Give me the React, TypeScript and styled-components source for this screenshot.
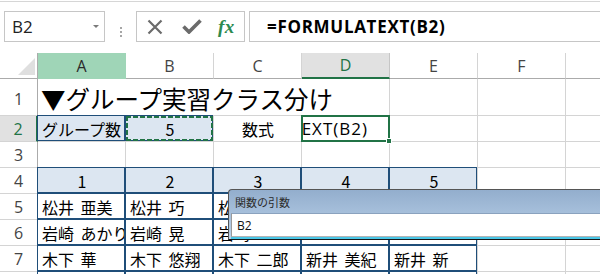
import React from 'react';
import styled, { createGlobalStyle, css } from 'styled-components';

const UI = `"Open Sans", "Liberation Sans", sans-serif`;
const JP = `"Noto Sans CJK JP", "Noto Sans", sans-serif`;

const GlobalStyle = createGlobalStyle`
  html, body { margin: 0; padding: 0; background: #fff; }
  body { width: 600px; height: 274px; overflow: hidden; font-family: ${JP}; }
  #root { width: 600px; height: 274px; }
  * { box-sizing: border-box; }
`;

const Window = styled.div`
  width: 600px;
  height: 274px;
  overflow: hidden;
  background: #fff;
  display: flex;
  flex-direction: column;
`;

/* ---------- formula bar ---------- */
const FormulaBar = styled.div`
  flex: none;
  margin-top: 1px;
  height: 52px;
  border-top: 1px solid #d6d6d6;
  padding: 9px 0 0 4px;
  display: flex;
  align-items: flex-start;
`;

const NameBox = styled.div`
  flex: none;
  width: 101px;
  height: 31px;
  border: 1px solid #c6c6c6;
  display: flex;
  align-items: center;
  justify-content: space-between;
  padding: 0 5px 0 7px;
  font: 17px ${UI};
  color: #222;
`;

const DropArrow = styled.span`
  width: 0;
  height: 0;
  border-left: 3px solid transparent;
  border-right: 3px solid transparent;
  border-top: 3px solid #7a7a7a;
`;

const Grip = styled.div`
  flex: none;
  align-self: center;
  margin: 0 14px 0 15px;
  display: flex;
  flex-direction: column;
  gap: 2px;
`;

const GripDot = styled.span`
  width: 2px;
  height: 2px;
  background: #a6a6a6;
`;

const ButtonGroup = styled.div`
  flex: none;
  width: 109px;
  height: 31px;
  border: 1px solid #c6c6c6;
  display: flex;
  align-items: center;
  padding-left: 10px;
`;

const IconSlot = styled.span<{ $gap: number }>`
  display: flex;
  align-items: center;
  margin-right: ${p => p.$gap}px;
`;

const FxLabel = styled.span`
  font: italic bold 19px "Liberation Serif", "DejaVu Serif", serif;
  color: #2c8a50;
  letter-spacing: 0.5px;
  line-height: 1;
  margin-top: -1px;
`;

const FormulaInput = styled.div`
  flex: none;
  width: 420px;
  height: 31px;
  margin-left: 4px;
  border: 1px solid #c6c6c6;
  border-right: none;
  display: flex;
  align-items: center;
  padding-left: 17px;
  font: bold 17px ${UI};
  letter-spacing: 0.7px;
  color: #000;
`;

/* ---------- sheet grid ---------- */
const Sheet = styled.div`
  position: relative;
  flex: none;
  display: grid;
  width: 654px;
  grid-template-columns: 38px repeat(7, 88px);
  grid-template-rows: 26px 37px repeat(7, 26px);
`;

const Corner = styled.div`
  border-right: 1px solid #ababab;
  border-bottom: 1px solid #ababab;
  display: flex;
  align-items: flex-end;
  justify-content: flex-end;
  padding: 0 2px 3px 0;
`;

const CornerTriangle = styled.span`
  width: 0;
  height: 0;
  border-left: 17px solid transparent;
  border-bottom: 17px solid #dfdfdf;
`;

type ColState = 'normal' | 'range' | 'active';

const ColHeader = styled.div<{ $state: ColState }>`
  display: flex;
  align-items: center;
  justify-content: center;
  font: 16px ${UI};
  color: #444;
  background: #fff;
  border-right: 1px solid #d4d4d4;
  border-bottom: 1px solid #ababab;
  ${p =>
    p.$state === 'range' &&
    css`
      background: #9fd5b7;
      color: #2b2b2b;
      border-right-color: #9fd5b7;
      border-bottom-color: #9fd5b7;
    `}
  ${p =>
    p.$state === 'active' &&
    css`
      background: #e1e1e1;
      color: #217346;
      border-right-color: #c6c6c6;
      border-bottom: 2px solid #217346;
    `}
`;

const RowHeader = styled.div<{ $active?: boolean; $bottom?: boolean }>`
  display: flex;
  justify-content: center;
  align-items: ${p => (p.$bottom ? 'flex-end' : 'center')};
  padding-bottom: ${p => (p.$bottom ? '5px' : '0')};
  font: 16px ${UI};
  color: #444;
  border-right: 1px solid #ababab;
  border-bottom: 1px solid #d4d4d4;
  ${p =>
    p.$active &&
    css`
      background: #e1e1e1;
      color: #217346;
      border-right: 2px solid #217346;
    `}
`;

const boxBorder = css`
  &::before {
    content: '';
    position: absolute;
    top: -1px;
    left: -1px;
    right: 0;
    bottom: 0;
    border: 1px solid #1f4e79;
    z-index: 1;
    pointer-events: none;
  }
`;

const antsBorder = css`
  &::after {
    content: '';
    position: absolute;
    top: 0;
    left: 0;
    right: 0;
    bottom: 0;
    z-index: 2;
    pointer-events: none;
    background:
      repeating-linear-gradient(90deg, #217346 0 5px, transparent 5px 7px) top left / 100% 2px no-repeat,
      repeating-linear-gradient(90deg, #217346 0 5px, transparent 5px 7px) bottom left / 100% 2px no-repeat,
      repeating-linear-gradient(180deg, #217346 0 5px, transparent 5px 7px) top left / 2px 100% no-repeat,
      repeating-linear-gradient(180deg, #217346 0 5px, transparent 5px 7px) top right / 2px 100% no-repeat;
  }
`;

const activeBorder = css`
  &::after {
    content: '';
    position: absolute;
    top: -1px;
    left: -1px;
    right: -1px;
    bottom: -1px;
    border: 2px solid #217346;
    z-index: 2;
    pointer-events: none;
  }
`;

type CellKind = 'plain' | 'ants' | 'edit';

const Cell = styled.div<{ $fill?: boolean; $box?: boolean; $center?: boolean; $kind?: CellKind }>`
  position: relative;
  display: flex;
  align-items: center;
  justify-content: ${p => (p.$center ? 'center' : 'flex-start')};
  padding: 0 3px 0 4px;
  font: 16px ${JP};
  line-height: 1;
  color: #000;
  white-space: nowrap;
  word-spacing: 3px;
  min-width: 0;
  border-right: 1px solid #d4d4d4;
  border-bottom: 1px solid #d4d4d4;
  background: ${p => (p.$fill ? '#dce6f1' : '#fff')};
  ${p => p.$box && boxBorder}
  ${p => p.$kind === 'ants' && antsBorder}
  ${p => p.$kind === 'edit' && activeBorder}
  ${p => p.$kind === 'edit' && css`padding: 0;`}
`;

const TitleCell = styled(Cell)`
  grid-column: span 4;
  align-items: flex-end;
  padding: 0 0 4px 3px;
  font-size: 24.5px;
  word-spacing: 0;
`;

const EditClip = styled.span`
  flex: 1;
  min-width: 0;
  overflow: hidden;
  display: flex;
  justify-content: flex-end;
  padding-right: 21px;
  font: 17px ${UI};
  letter-spacing: 1px;
`;

const FillHandle = styled.span`
  position: absolute;
  right: -3px;
  bottom: -3px;
  width: 6px;
  height: 6px;
  background: #217346;
  border: 1px solid #fff;
  z-index: 3;
`;

/* ---------- function-arguments dialog ---------- */
const ArgDialog = styled.div`
  position: absolute;
  top: 136px;
  left: 228px;
  width: 420px;
  height: 51px;
  z-index: 5;
  display: flex;
  flex-direction: column;
  border: 1px solid #555;
  border-right: none;
  border-bottom-color: #161616;
  border-radius: 4px 0 0 0;
  background: linear-gradient(#93aecd, #bcd3eb);
`;

const DialogTitle = styled.div`
  height: 23px;
  flex: none;
  display: flex;
  align-items: center;
  padding: 1px 0 0 6px;
  font: 11px ${JP};
  color: #2a2a2a;
`;

const DialogBody = styled.div`
  flex: 1;
  margin: 0 0 2px 2px;
  background: #fff;
  border-top: 1px solid #8aa2be;
  border-left: 1px solid #9a9a9a;
  border-bottom: 1px solid #b4b4b4;
  box-shadow: 0 2px 0 #4ac6e6;
  display: flex;
  align-items: center;
  padding: 0 0 0 5px;
  font: 12px ${UI};
  color: #111;
`;

/* ---------- data ---------- */
type CellDef = { text?: string; fill?: boolean; box?: boolean; center?: boolean; kind?: CellKind };

const cols: { label: string; state: ColState }[] = [
  { label: 'A', state: 'range' },
  { label: 'B', state: 'normal' },
  { label: 'C', state: 'normal' },
  { label: 'D', state: 'active' },
  { label: 'E', state: 'normal' },
  { label: 'F', state: 'normal' },
  { label: '', state: 'normal' },
];

const name = (text?: string): CellDef => ({ text, box: true });
const empty = (): CellDef => ({});

const rows: { num: number; active?: boolean; cells: CellDef[] }[] = [
  {
    num: 2,
    active: true,
    cells: [
      { text: 'グループ数', fill: true, box: true },
      { text: '5', fill: true, box: true, center: true, kind: 'ants' },
      { text: '数式', center: true },
      { text: '=FORMULATEXT(B2)', kind: 'edit' },
      empty(),
      empty(),
      empty(),
    ],
  },
  { num: 3, cells: Array.from({ length: 7 }, empty) },
  {
    num: 4,
    cells: [
      ...['1', '2', '3', '4', '5'].map(t => ({ text: t, fill: true, box: true, center: true })),
      empty(),
      empty(),
    ],
  },
  { num: 5, cells: [name('松井 亜美'), name('松井 巧'), name('松井'), name(), name(), empty(), empty()] },
  { num: 6, cells: [name('岩崎 あかり'), name('岩崎 晃'), name('岩崎'), name(), name(), empty(), empty()] },
  {
    num: 7,
    cells: [name('木下 華'), name('木下 悠翔'), name('木下 二郎'), name('新井 美紀'), name('新井 新'), empty(), empty()],
  },
  { num: 8, cells: [name(), name(), name(), name(), name(), empty(), empty()] },
];

const CloseIcon = () => (
  <svg width="16" height="16" viewBox="0 0 16 16">
    <path d="M1.5 1.5 L14.5 14.5 M14.5 1.5 L1.5 14.5" stroke="#6b6b6b" strokeWidth="2.2" fill="none" />
  </svg>
);

const CheckIcon = () => (
  <svg width="20" height="15" viewBox="0 0 20 15">
    <path d="M1.5 7.5 L7 13 L18.5 1.5" stroke="#6b6b6b" strokeWidth="3.6" fill="none" strokeLinejoin="miter" />
  </svg>
);

export default function App() {
  return (
    <>
      <GlobalStyle />
      <Window>
        <FormulaBar>
          <NameBox>
            <span>B2</span>
            <DropArrow />
          </NameBox>
          <Grip>
            <GripDot />
            <GripDot />
            <GripDot />
          </Grip>
          <ButtonGroup>
            <IconSlot $gap={19}>
              <CloseIcon />
            </IconSlot>
            <IconSlot $gap={16}>
              <CheckIcon />
            </IconSlot>
            <FxLabel>fx</FxLabel>
          </ButtonGroup>
          <FormulaInput>=FORMULATEXT(B2)</FormulaInput>
        </FormulaBar>

        <Sheet>
          <Corner>
            <CornerTriangle />
          </Corner>
          {cols.map((c, i) => (
            <ColHeader key={i} $state={c.state}>
              {c.label}
            </ColHeader>
          ))}

          <RowHeader $bottom>1</RowHeader>
          <TitleCell>▼グループ実習クラス分け</TitleCell>
          <Cell />
          <Cell />
          <Cell />

          {rows.map(r => (
            <React.Fragment key={r.num}>
              <RowHeader $active={r.active}>{r.num}</RowHeader>
              {r.cells.map((c, i) => (
                <Cell key={i} $fill={c.fill} $box={c.box} $center={c.center} $kind={c.kind}>
                  {c.kind === 'edit' ? (
                    <>
                      <EditClip>{c.text}</EditClip>
                      <FillHandle />
                    </>
                  ) : (
                    c.text
                  )}
                </Cell>
              ))}
            </React.Fragment>
          ))}

          <ArgDialog>
            <DialogTitle>関数の引数</DialogTitle>
            <DialogBody>B2</DialogBody>
          </ArgDialog>
        </Sheet>
      </Window>
    </>
  );
}
